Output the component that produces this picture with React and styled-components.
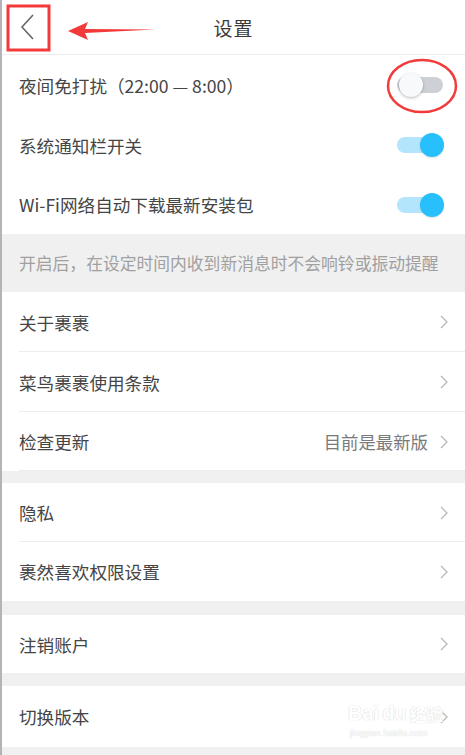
import React from "react";
import styled, { createGlobalStyle } from "styled-components";

const Global = createGlobalStyle`
  html, body { margin: 0; padding: 0; background: #f0f0f0; }
  body { font-family: "Noto Sans CJK SC", "Noto Sans", sans-serif; }
`;

const Page = styled.div`
  position: relative;
  width: 465px;
  height: 755px;
  box-sizing: border-box;
  border-left: 2px solid #b4b4b4;
  background: #f0f0f0;
  overflow: hidden;
  display: flex;
  flex-direction: column;
`;

const Header = styled.div`
  height: 54px;
  flex: none;
  background: #fff;
  border-bottom: 1px solid #ececec;
  display: flex;
  align-items: center;
  justify-content: center;
  position: relative;
`;

const Title = styled.div`
  font-size: 19px;
  color: #3a3a3a;
  letter-spacing: 1px;
`;

const Back = styled.div`
  position: absolute;
  left: 16px;
  top: 14px;
  width: 20px;
  height: 26px;
`;

const Group = styled.div`
  background: #fff;
  display: flex;
  flex-direction: column;
  flex: none;
  margin-bottom: ${(p) => p.$gap || 0}px;
`;

const Row = styled.div`
  height: ${(p) => p.$h || 60}px;
  box-sizing: border-box;
  display: flex;
  align-items: center;
  justify-content: space-between;
  padding: 0 17px 0 17px;
  position: relative;
  ${(p) =>
    p.$divider
      ? `&::after { content: ""; position: absolute; left: 17px; right: 0; bottom: 0; height: 1px; background: #ececec; }`
      : ""}
`;

const Label = styled.div`
  font-size: 17.6px;
  color: #454545;
  white-space: nowrap;
`;

const Right = styled.div`
  display: flex;
  align-items: center;
  gap: 12px;
`;

const Value = styled.div`
  font-size: 17.4px;
  color: #7a7a7a;
`;

const Note = styled.div`
  height: 58px;
  flex: none;
  display: flex;
  align-items: center;
  padding-left: 17px;
  font-size: 16.8px;
  color: #a0a0a0;
  white-space: nowrap;
`;

const Track = styled.div`
  position: relative;
  width: 46px;
  height: 16px;
  border-radius: 8px;
  margin-right: 5px;
  background: ${(p) => (p.$on ? "#b3e6fd" : "#cdd0d5")};
`;

const Knob = styled.div`
  position: absolute;
  top: -4px;
  ${(p) => (p.$on ? "right: -1px;" : "left: 2px;")}
  width: 24px;
  height: 24px;
  border-radius: 50%;
  background: ${(p) => (p.$on ? "#27bffc" : "#f8f9fb")};
  box-shadow: ${(p) =>
    p.$on ? "0 1px 2px rgba(0,0,0,0.12)" : "0 1px 3px rgba(0,0,0,0.28)"};
`;

const Fill = styled.div`
  flex: 1;
`;

const Overlay = styled.svg`
  position: absolute;
  left: -2px;
  top: 0;
  pointer-events: none;
`;

const Watermark = styled.div`
  position: absolute;
  left: 346px;
  top: 703px;
  color: #fff;
  text-shadow: 0 0 1px #d4d4d4, 0 0 1px #d4d4d4;
  font-family: "Liberation Sans", sans-serif;
  line-height: 1;
  opacity: 0.85;
`;

const WmTop = styled.div`
  font-size: 20px;
  font-weight: bold;
  display: flex;
  align-items: center;
  gap: 3px;
`;

const WmCjk = styled.span`
  font-family: "Noto Sans CJK SC", sans-serif;
  font-size: 17px;
`;

const WmSub = styled.div`
  font-size: 9px;
  margin-top: 6px;
  margin-left: 2px;
  letter-spacing: 0.3px;
`;

const Switch = ({ on }) => (
  <Track $on={on}>
    <Knob $on={on} />
  </Track>
);

const Chevron = () => (
  <svg width="8" height="14" viewBox="0 0 8 14">
    <path d="M1 1 L7 7 L1 13" fill="none" stroke="#b8b8b8" strokeWidth="1.3" />
  </svg>
);

const NavRow = ({ label, value, divider, h }) => (
  <Row $divider={divider} $h={h}>
    <Label>{label}</Label>
    <Right>
      {value && <Value>{value}</Value>}
      <Chevron />
    </Right>
  </Row>
);

export default function App() {
  return (
    <>
      <Global />
      <Page>
        <Header>
          <Back>
            <svg width="20" height="26" viewBox="0 0 20 26">
              <path d="M15 1 L4 13 L15 25" fill="none" stroke="#666" strokeWidth="1.6" />
            </svg>
          </Back>
          <Title>设置</Title>
        </Header>

        <Group>
          <Row $h={60}>
            <Label>夜间免打扰（22:00 — 8:00）</Label>
            <Switch on={false} />
          </Row>
          <Row $h={60}>
            <Label>系统通知栏开关</Label>
            <Switch on />
          </Row>
          <Row $h={59}>
            <Label>Wi-Fi网络自动下载最新安装包</Label>
            <Switch on />
          </Row>
        </Group>

        <Note>开启后，在设定时间内收到新消息时不会响铃或振动提醒</Note>

        <Group $gap={12}>
          <NavRow label="关于裹裹" divider h={60} />
          <NavRow label="菜鸟裹裹使用条款" divider h={60} />
          <NavRow label="检查更新" value="目前是最新版" divider h={59} />
        </Group>

        <Group $gap={14}>
          <NavRow label="隐私" divider h={59} />
          <NavRow label="裹然喜欢权限设置" h={59} />
        </Group>

        <Group $gap={13}>
          <NavRow label="注销账户" h={58} />
        </Group>

        <Group>
          <NavRow label="切换版本" h={61} />
        </Group>

        <Fill />

        <Watermark>
          <WmTop>
            <span>Bai</span>
            <span>du</span>
            <WmCjk>经验</WmCjk>
          </WmTop>
          <WmSub>jingyan.baidu.com</WmSub>
        </Watermark>

        <Overlay width="465" height="755" viewBox="0 0 465 755">
          <rect x="8" y="6" width="41" height="44" fill="none" stroke="#f23a3a" strokeWidth="3" />
          <path d="M68 31 L88 22 L85 29 L155 29.5 L85 33 L88 40 Z" fill="#f23a3a" />
          <ellipse cx="422" cy="86" rx="34" ry="26" fill="none" stroke="#f23a3a" strokeWidth="2.5" />
        </Overlay>
      </Page>
    </>
  );
}
